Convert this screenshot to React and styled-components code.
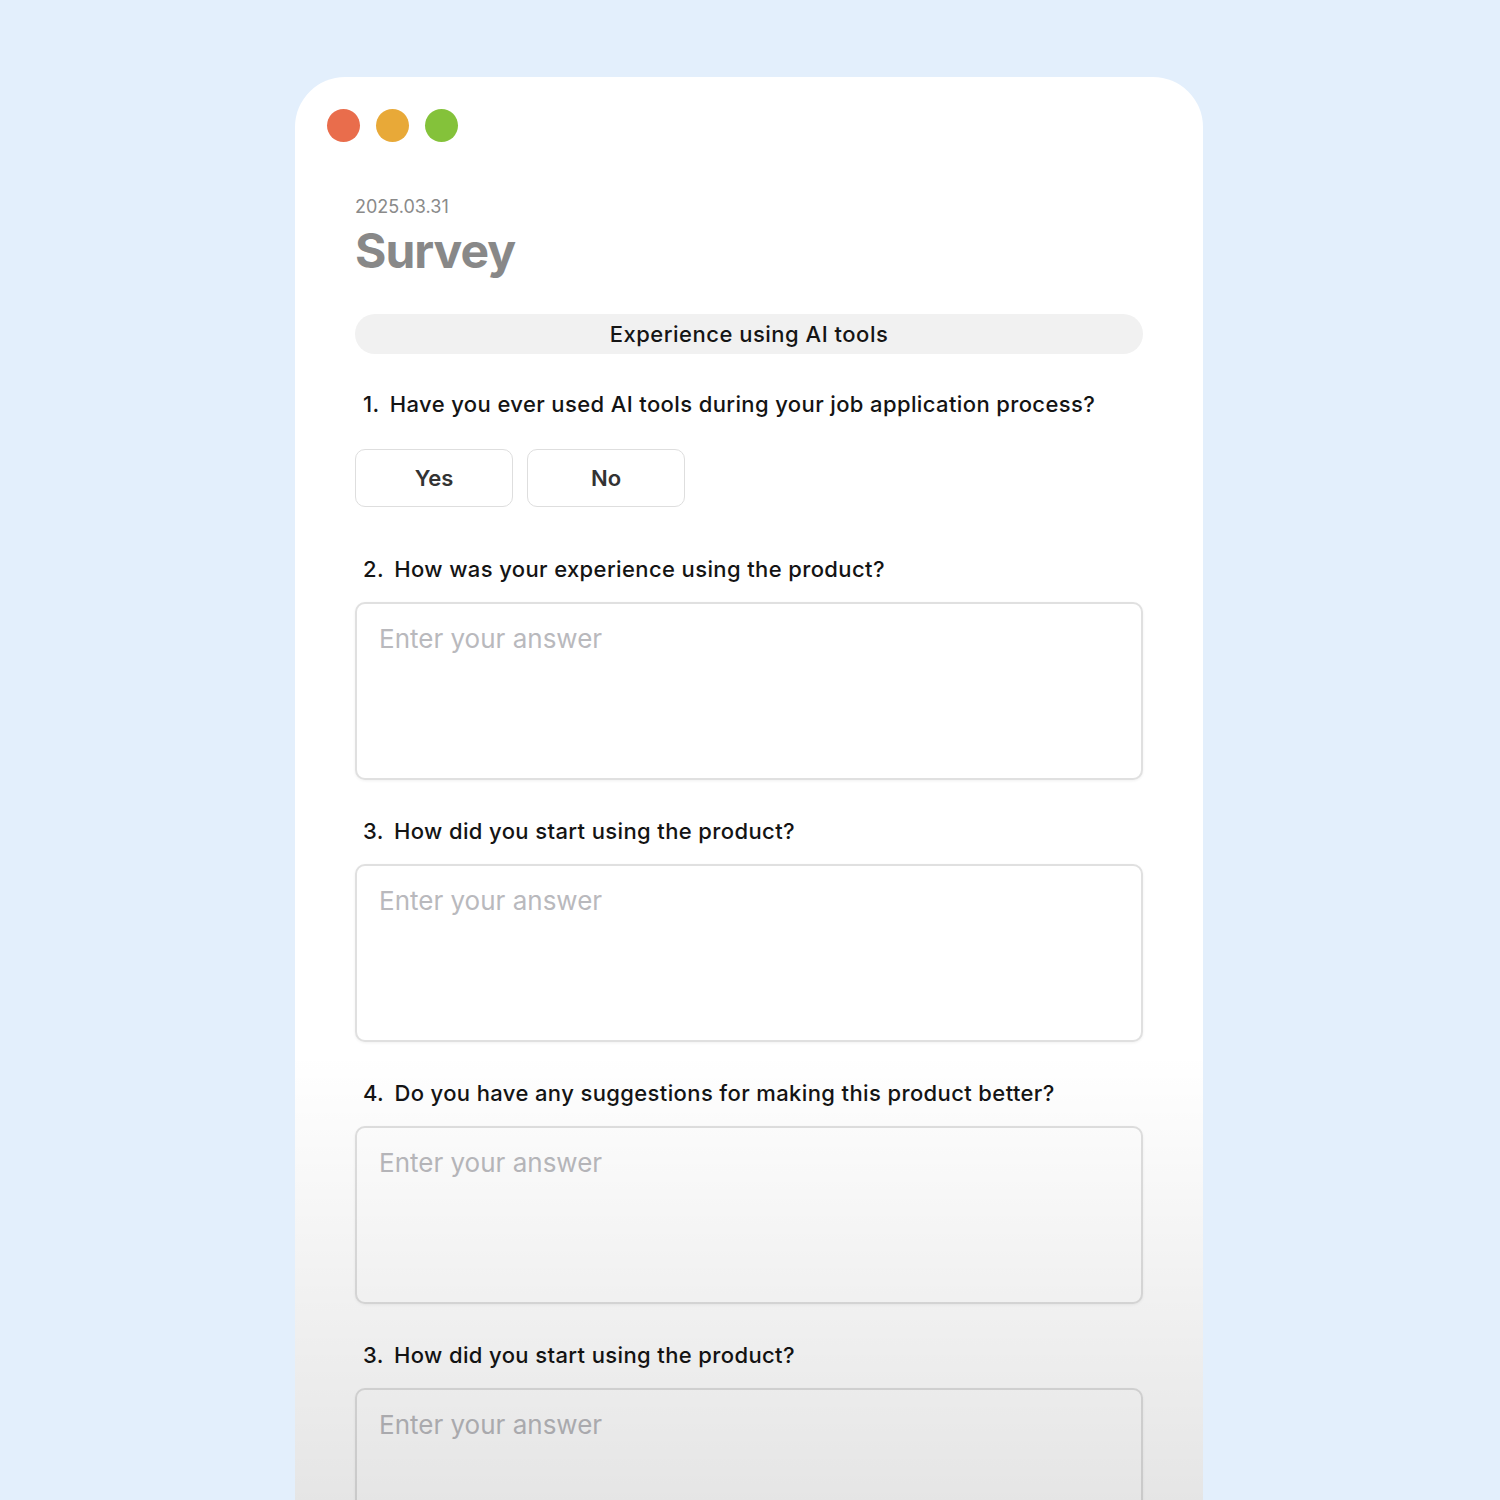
import React from 'react'
import styled, { createGlobalStyle } from 'styled-components'

const GlobalStyle = createGlobalStyle`
  html, body {
    margin: 0;
    padding: 0;
    background: #e3effc;
    font-family: Inter, "Noto Sans", sans-serif;
  }
  #root {
    height: 1500px;
    overflow: hidden;
  }
`

const Page = styled.div`
  display: flex;
  justify-content: center;
  padding: 77px 2px 0 0;
`

const Window = styled.div`
  position: relative;
  width: 908px;
  box-sizing: border-box;
  background: #ffffff;
  border-radius: 50px 50px 0 0;
  padding: 32px 60px 80px 32px;
  overflow: hidden;
`

const Dots = styled.div`
  display: flex;
  gap: 16px;
`

const Dot = styled.span`
  width: 33px;
  height: 33px;
  border-radius: 50%;
  background: ${({ color }) => color};
`

const Body = styled.div`
  display: flex;
  flex-direction: column;
  padding-left: 28px;
  margin-top: 55px;
`

const DateText = styled.div`
  font-size: 18px;
  line-height: 20px;
  color: #8a8a8a;
`

const Title = styled.h1`
  margin: 5px 0 0;
  font-size: 48px;
  line-height: 58px;
  font-weight: 700;
  color: #888888;
  letter-spacing: -1px;
`

const Section = styled.div`
  margin-top: 34px;
  height: 40px;
  border-radius: 20px;
  background: #f1f1f1;
  display: flex;
  align-items: center;
  justify-content: center;
  font-size: 22px;
  font-weight: 450;
  letter-spacing: 0.5px;
  color: #151515;
`

const Question = styled.div`
  margin-top: ${({ top }) => top}px;
  padding-left: 8px;
  font-size: 22px;
  font-weight: 450;
  letter-spacing: 0.38px;
  line-height: 30px;
  color: #141414;
`

const Num = styled.span`
  margin-right: 4px;
`

const Choices = styled.div`
  display: flex;
  gap: 14px;
  margin-top: 30px;
`

const Choice = styled.button`
  width: 158px;
  height: 58px;
  border: 1.5px solid #dedede;
  border-radius: 10px;
  background: #ffffff;
  font-family: inherit;
  font-size: 22px;
  font-weight: 600;
  color: #333333;
  cursor: pointer;
`

const Answer = styled.textarea`
  display: block;
  margin-top: 18px;
  height: 178px;
  box-sizing: border-box;
  border: 2px solid #e0e0e0;
  border-radius: 10px;
  box-shadow: 0 1px 3px rgba(0, 0, 0, 0.06);
  padding: 17px 22px;
  background: #ffffff;
  font-family: inherit;
  font-size: 26px;
  line-height: 36px;
  color: #222;
  resize: none;
  outline: none;

  &::placeholder {
    color: #b9b9bd;
  }
`

const Fade = styled.div`
  position: absolute;
  left: 0;
  right: 0;
  top: 975px;
  bottom: 0;
  pointer-events: none;
  background: linear-gradient(
    to bottom,
    rgba(0, 0, 0, 0) 0px,
    rgba(0, 0, 0, 0.1) 450px,
    rgba(0, 0, 0, 0.12) 600px
  );
`

const questions = [
  'How was your experience using the product?',
  'How did you start using the product?',
  'Do you have any suggestions for making this product better?',
]

export default function App() {
  return (
    <>
      <GlobalStyle />
      <Page>
        <Window>
          <Dots>
            <Dot color="#e96d4c" />
            <Dot color="#e8a938" />
            <Dot color="#84c23a" />
          </Dots>
          <Body>
            <DateText>2025.03.31</DateText>
            <Title>Survey</Title>
            <Section>Experience using AI tools</Section>

            <Question top={35}><Num>1.</Num> Have you ever used AI tools during your job application process?</Question>
            <Choices>
              <Choice>Yes</Choice>
              <Choice>No</Choice>
            </Choices>

            {questions.map((q, i) => (
              <React.Fragment key={q}>
                <Question top={i === 0 ? 47 : 36}><Num>{i + 2}.</Num> {q}</Question>
                <Answer placeholder="Enter your answer" />
              </React.Fragment>
            ))}

            <Question top={36}><Num>3.</Num> How did you start using the product?</Question>
            <Answer placeholder="Enter your answer" />
          </Body>
          <Fade />
        </Window>
      </Page>
    </>
  )
}
